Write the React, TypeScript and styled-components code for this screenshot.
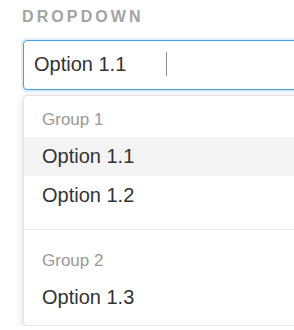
import React from "react";
import styled, { createGlobalStyle } from "styled-components";

const Global = createGlobalStyle`
  html, body { margin: 0; padding: 0; background: #fff; overflow: hidden; }
  body { font-family: "Liberation Sans", Arial, sans-serif; }
`;

const Page = styled.div`
  width: 360px;
  padding: 8px 0 0 23px;
  box-sizing: border-box;
`;

const Label = styled.div`
  margin-left: -1px;
  font-family: "Liberation Sans", Arial, sans-serif;
  font-size: 16px;
  line-height: 18px;
  font-weight: 700;
  letter-spacing: 3.1px;
  color: #a3a3a3;
  text-transform: uppercase;
`;

const Control = styled.div`
  margin-top: 14px;
  height: 50px;
  box-sizing: border-box;
  border: 1px solid #4a9fe3;
  border-radius: 4px;
  box-shadow: 0 0 0 2px rgba(74, 159, 227, 0.18);
  background: #fff;
  display: flex;
  align-items: center;
  padding: 0 10px 2px 10px;
`;

const Value = styled.span`
  font-size: 20px;
  line-height: 24px;
  color: #333;
`;

const Caret = styled.span`
  display: block;
  width: 1px;
  height: 24px;
  margin-left: 40px;
  background: #8c8c8c;
`;

const Menu = styled.div`
  margin-top: 5px;
  border: 1px solid #e4e4e4;
  border-radius: 4px;
  background: #fff;
  box-shadow: 0 2px 8px rgba(0, 0, 0, 0.14);
  padding-bottom: 8px;
`;

const Group = styled.div`
  display: flex;
  flex-direction: column;
`;

const GroupHeading = styled.div`
  padding: 14px 18px 7px 18px;
  font-size: 17px;
  line-height: 20px;
  color: #999;
`;

const Option = styled.div<{ $active?: boolean }>`
  height: 39px;
  line-height: 39px;
  padding: 0 18px;
  font-size: 20px;
  color: #333;
  background: ${(p) => (p.$active ? "#f4f4f4" : "transparent")};
`;

const Separator = styled.div`
  height: 1px;
  background: #e6e6e6;
  margin: 14px 0 7px 0;
`;

const groups = [
  { label: "Group 1", options: ["Option 1.1", "Option 1.2"] },
  { label: "Group 2", options: ["Option 1.3"] },
];

export default function App() {
  return (
    <>
      <Global />
      <Page>
        <Label>Dropdown</Label>
        <Control>
          <Value>Option 1.1</Value>
          <Caret />
        </Control>
        <Menu>
          {groups.map((g, gi) => (
            <React.Fragment key={g.label}>
              {gi > 0 && <Separator />}
              <Group>
                <GroupHeading>{g.label}</GroupHeading>
                {g.options.map((o) => (
                  <Option key={o} $active={o === "Option 1.1"}>
                    {o}
                  </Option>
                ))}
              </Group>
            </React.Fragment>
          ))}
        </Menu>
      </Page>
    </>
  );
}
